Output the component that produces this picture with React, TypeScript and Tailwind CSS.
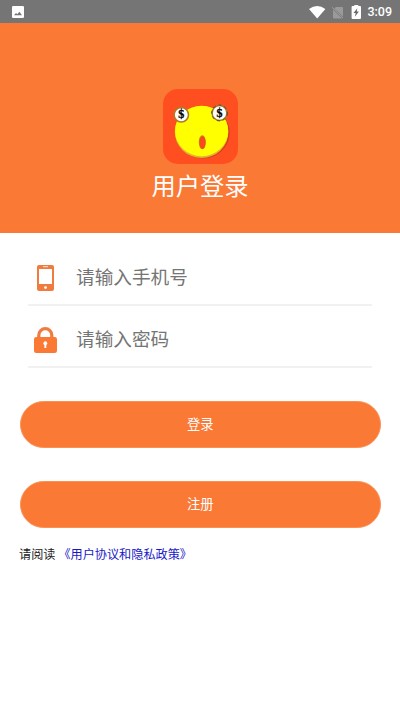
import React from 'react';

function StatusBar() {
  return (
    <header className="flex h-[23px] items-center justify-between bg-[#757575] pl-3 pr-2">
      <svg className="h-3 w-3" viewBox="0 0 12 12">
        <rect width="12" height="12" rx="1.3" fill="#fff" />
        <path d="M2 9.3 4 7l1.3 1.3L7.4 5.8 10 9.3Z" fill="#757575" />
      </svg>
      <div className="flex items-center">
        <svg className="h-[14px] w-[52px]" viewBox="0 0 52 14">
          <path d="M0 4Q8.2-2 16.4 4L8.2 13.6Z" fill="#fff" />
          <path d="M27 2h6q1 0 1 1v8.8L25.4 3.6Z M24 4.6v7.8q0 1 1 1h8Z" fill="#9a9a9a" />
          <path d="m23.2 2.4 10.8 10.8" stroke="#a8a8a8" strokeWidth=".9" />
          <path d="M45.3 1V0h4v1h1.8q.9 0 .9.9V13q0 1-1 1h-7.4q-1 0-1-1V1.9q0-.9.9-.9Z" fill="#fff" />
          <path d="M48.3 3.3 44.5 8.1h2.2l-.8 3.7 4-5.3h-2.2Z" fill="#666" />
        </svg>
        <span className="ml-[6px] font-[Roboto,sans-serif] text-[12.5px] font-medium leading-[23px] text-white">3:09</span>
      </div>
    </header>
  );
}

function Logo() {
  return (
    <svg className="h-[75px] w-[75px]" viewBox="0 0 75 75">
      <rect width="75" height="75" rx="15" fill="#ff4e20" />
      <ellipse cx="39.7" cy="43.6" rx="27" ry="26" fill="#d83c1a" />
      <ellipse cx="38.6" cy="43" rx="26.8" ry="26" fill="#e2b52c" />
      <ellipse cx="38.6" cy="42" rx="26.6" ry="25.2" fill="#ffff00" />
      <ellipse cx="39.3" cy="53.2" rx="3.5" ry="7" fill="#b88a16" />
      <ellipse cx="39.5" cy="53.5" rx="2.9" ry="6.3" fill="#ff471d" />
      <circle cx="18.3" cy="25.8" r="7.2" fill="#fff" stroke="#b07a26" strokeWidth="1.5" />
      <circle cx="56.5" cy="24" r="7.4" fill="#fff" stroke="#a77a26" strokeWidth="1.5" />
      <circle cx="56.5" cy="24" r="7.9" fill="none" stroke="#333" strokeWidth=".7" strokeDasharray="3 3" />
      <text x="18.3" y="29.4" textAnchor="middle" className="font-['Liberation_Serif',serif] text-[12px] font-bold" stroke="#000" strokeWidth=".3">$</text>
      <text x="56.4" y="27.5" textAnchor="middle" className="font-['Liberation_Serif',serif] text-[12px] font-bold" stroke="#000" strokeWidth=".3">$</text>
    </svg>
  );
}

function PhoneIcon() {
  return (
    <svg className="mt-2 h-[26px] w-[23px]" viewBox="0 0 23 26">
      <rect x="3" width="17" height="26" rx="2" fill="#f07b3e" />
      <path d="M5 4h13v15H5Z" fill="#fff" />
      <path d="M9 1.7h5" stroke="#fff" strokeWidth=".8" />
      <circle cx="11.5" cy="22.6" r="1.4" fill="#fff" />
    </svg>
  );
}

function LockIcon() {
  return (
    <svg className="mt-2 h-[26px] w-[23px]" viewBox="0 0 23 26">
      <path d="M4.8 11V8.2a6.5 6.5 0 0 1 13 0V11" fill="none" stroke="#f07b3e" strokeWidth="3.2" />
      <rect y="10" width="23" height="16" rx="2.3" fill="#f97935" />
      <circle cx="11.3" cy="16.2" r="1.9" fill="#fff" />
      <path d="M10.4 17h1.9v4h-1.9Z" fill="#fff" />
    </svg>
  );
}

function Field({ icon, placeholder, type }: { icon: React.ReactNode; placeholder: string; type: string }) {
  return (
    <label className="flex h-[62px] items-center border-b-2 border-[#f1f1f1] pl-[6px]">
      {icon}
      <input
        type={type}
        placeholder={placeholder}
        className="ml-[19px] mt-[3px] h-10 min-w-0 flex-1 bg-transparent text-[18.65px] outline-none placeholder:text-[#757575]"
      />
    </label>
  );
}

function PillButton({ children }: { children: React.ReactNode }) {
  return (
    <button className="h-[47px] w-full rounded-full border border-[#fb9055] bg-[#f97935] pb-[2px] text-[13.3px] text-white">
      {children}
    </button>
  );
}

export default function App() {
  return (
    <div className="min-h-[711px] w-full bg-white font-['Noto_Sans_CJK_SC',sans-serif]">
      <StatusBar />
      <section className="flex h-[210px] flex-col items-center bg-[#f97935] pt-[66px]">
        <Logo />
        <h1 className="mt-[3px] text-[24.3px] leading-[36px] text-white">用户登录</h1>
      </section>
      <main>
        <div className="mx-7 pt-[11px]">
          <Field icon={<PhoneIcon />} placeholder="请输入手机号" type="tel" />
          <Field icon={<LockIcon />} placeholder="请输入密码" type="password" />
        </div>
        <div className="ml-[19.5px] mr-[19px] mt-[33px] flex flex-col gap-[33px]">
          <PillButton>登录</PillButton>
          <PillButton>注册</PillButton>
        </div>
        <p className="ml-[19px] mt-[16px] text-[12.15px] leading-5 text-[#222]">
          请阅读<a className="ml-[3px] text-[#1818c8]">《用户协议和隐私政策》</a>
        </p>
      </main>
    </div>
  );
}
